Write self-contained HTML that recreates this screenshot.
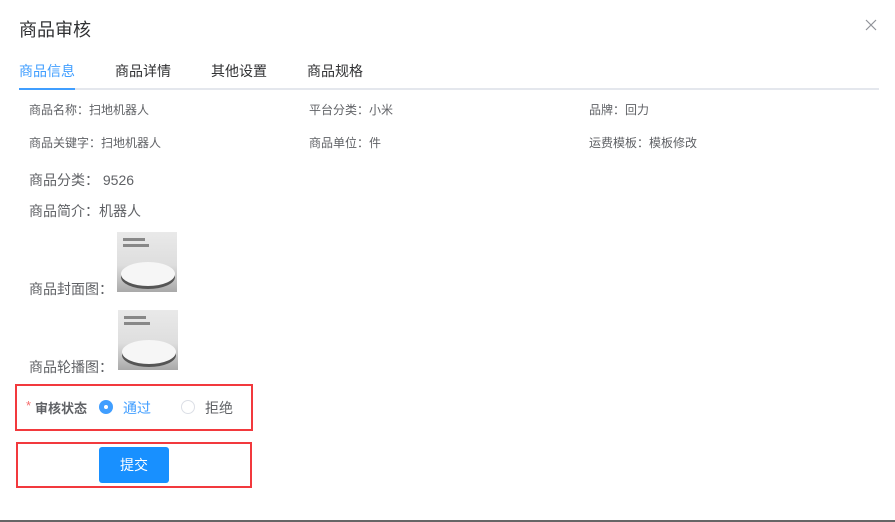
<!DOCTYPE html>
<html><head><meta charset="utf-8"><style>
*{margin:0;padding:0;box-sizing:border-box}
body{width:895px;height:522px;background:#fff;position:relative;overflow:hidden;font-family:"Liberation Sans","Noto Sans CJK SC",sans-serif;color:#606266}
.a{position:absolute;white-space:nowrap}
.s{font-size:12px}
.img{position:absolute;width:60px;height:60px;background:linear-gradient(180deg,#e9e9e9 0%,#dedede 55%,#a9a9a9 100%);overflow:hidden}
.img .r{position:absolute;left:4px;top:30px;width:54px;height:24px;border-radius:50%;background:#f6f6f6;box-shadow:0 3px 0 #555}
.img .t{position:absolute;left:6px;top:6px;width:22px;height:3px;background:#888}
.img .t2{position:absolute;left:6px;top:12px;width:26px;height:3px;background:#888}
</style></head><body>
<div class="a" style="left:19px;top:16px;font-size:18px;color:#303133">商品审核</div>
<svg class="a" style="left:865px;top:19px" width="12" height="12"><path d="M1 1L11 11M11 1L1 11" stroke="#909399" stroke-width="1.2"/></svg>
<div class="a" style="left:19px;top:61px;font-size:14px;color:#409eff">商品信息</div>
<div class="a" style="left:115px;top:61px;font-size:14px;color:#303133">商品详情</div>
<div class="a" style="left:211px;top:61px;font-size:14px;color:#303133">其他设置</div>
<div class="a" style="left:307px;top:61px;font-size:14px;color:#303133">商品规格</div>
<div class="a" style="left:19px;top:88px;width:860px;height:2px;background:#e4e7ed"></div>
<div class="a" style="left:19px;top:88px;width:56px;height:2px;background:#409eff"></div>
<div class="a s" style="left:29px;top:101px">商品名称：扫地机器人</div>
<div class="a s" style="left:309px;top:101px">平台分类：小米</div>
<div class="a s" style="left:589px;top:101px">品牌：回力</div>
<div class="a s" style="left:29px;top:134px">商品关键字：扫地机器人</div>
<div class="a s" style="left:309px;top:134px">商品单位：件</div>
<div class="a s" style="left:589px;top:134px">运费模板：模板修改</div>
<div class="a" style="left:29px;top:170px;font-size:14px">商品分类： 9526</div>
<div class="a" style="left:29px;top:201px;font-size:14px">商品简介：机器人</div>
<div class="a" style="left:29px;top:279px;font-size:14px">商品封面图：</div>
<div class="img" style="left:117px;top:232px"><div class="t"></div><div class="t2"></div><div class="r"></div></div>
<div class="a" style="left:29px;top:357px;font-size:14px">商品轮播图：</div>
<div class="img" style="left:118px;top:310px"><div class="t"></div><div class="t2"></div><div class="r"></div></div>
<div class="a" style="left:15px;top:384px;width:238px;height:47px;border:2px solid #f2393d"></div>
<div class="a" style="left:26px;top:398px;font-size:13px;color:#f56c6c">*</div>
<div class="a" style="left:35px;top:398px;font-size:13px;font-weight:bold;color:#606266">审核状态</div>
<div class="a" style="left:99px;top:400px;width:14px;height:14px;border-radius:50%;background:#409eff"><div style="position:absolute;left:5px;top:5px;width:4px;height:4px;border-radius:50%;background:#fff"></div></div>
<div class="a" style="left:123px;top:398px;font-size:14px;color:#409eff">通过</div>
<div class="a" style="left:181px;top:400px;width:14px;height:14px;border-radius:50%;border:1px solid #dcdfe6"></div>
<div class="a" style="left:205px;top:398px;font-size:14px">拒绝</div>
<div class="a" style="left:16px;top:442px;width:236px;height:46px;border:2px solid #f2393d"></div>
<div class="a" style="left:99px;top:447px;width:70px;height:36px;background:#1890ff;border-radius:3px;color:#fff;font-size:14px;text-align:center;line-height:36px">提交</div>
<div class="a" style="left:0;top:520px;width:895px;height:2px;background:#666"></div>
</body></html>
